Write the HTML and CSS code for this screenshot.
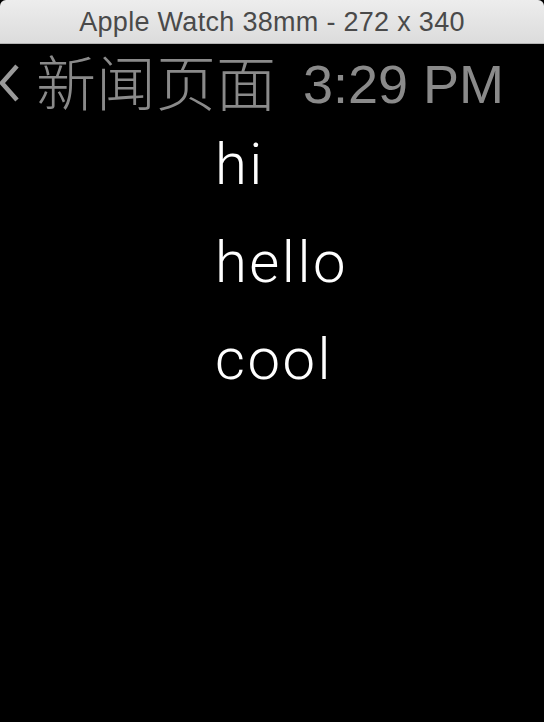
FILE: index.html
```html
<!DOCTYPE html>
<html>
<head>
<meta charset="utf-8">
<link rel="stylesheet" href="styles.css">
</head>
<body>
<div class="window">
  <div class="titlebar">Apple Watch 38mm - 272 x 340</div>
  <div class="screen">
    <div class="status">
      <div class="back">
        <svg class="chev" width="22" height="40" viewBox="0 0 22 40"><path d="M18 3 L3 20 L18 37" fill="none" stroke="#9a9a9a" stroke-width="4.5" stroke-linecap="butt" stroke-linejoin="miter"/></svg>
        <span class="title">新闻页面</span>
      </div>
      <span class="time">3:29 PM</span>
    </div>
    <div class="list">
      <div class="item">hi</div>
      <div class="item">hello</div>
      <div class="item">cool</div>
    </div>
  </div>
</div>
</body>
</html>
```
FILE: styles.css
```css
html, body {
  margin: 0;
  padding: 0;
  background: #000;
  width: 544px;
  height: 722px;
  overflow: hidden;
}
.window {
  width: 544px;
  height: 722px;
  display: flex;
  flex-direction: column;
}
.titlebar {
  height: 44px;
  box-sizing: border-box;
  background: linear-gradient(#ededed, #dcdcdc);
  border-bottom: 1px solid #b4b4b4;
  border-radius: 6px 6px 0 0;
  font-family: "Liberation Sans", Arial, sans-serif;
  font-size: 27px;
  letter-spacing: 0.3px;
  color: #4a4a4a;
  text-align: center;
  line-height: 44px;
  flex: none;
}
.screen {
  flex: 1;
  background: #000;
  display: flex;
  flex-direction: column;
}
.status {
  height: 78px;
  display: flex;
  align-items: center;
  justify-content: space-between;
  padding: 0 40px 0 0;
  color: #8a8a8a;
  font-family: "Liberation Sans", Arial, "Noto Sans CJK SC", sans-serif;
}
.back {
  display: flex;
  align-items: center;
  margin-left: -1px;
}
.chev {
  margin-right: 15px;
  margin-top: 0;
}
.title {
  font-family: "Noto Sans CJK SC", sans-serif;
  font-weight: 300;
  font-size: 60px;
  line-height: 66px;
  margin-top: -6px;
}
.time {
  font-size: 54px;
  line-height: 60px;
  margin-top: 2px;
}
.list {
  padding-left: 215px;
  margin-top: -6px;
  display: flex;
  flex-direction: column;
}
.item {
  font-family: Roboto, "Liberation Sans", sans-serif;
  font-weight: 300;
  font-size: 58px;
  letter-spacing: 2.5px;
  line-height: 97.5px;
  color: #fff;
}
```
